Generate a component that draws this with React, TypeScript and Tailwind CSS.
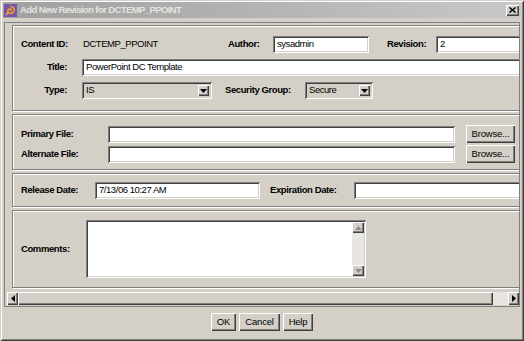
import React from "react";

const raised =
  "bg-[#d4d0c8] shadow-[inset_1px_1px_0_#ffffff,inset_-1px_-1px_0_#404040,inset_-2px_-2px_0_#808080]";
const sunken =
  "shadow-[inset_1px_1px_0_#808080,inset_-1px_-1px_0_#ffffff,inset_2px_2px_0_#404040,inset_-2px_-2px_0_#d4d0c8]";
const etched =
  "border border-[#808080] shadow-[inset_1px_1px_0_#ffffff,1px_1px_0_#ffffff]";
const txt = "text-[9.5px] tracking-[-0.45px]";

function TextBox({ w, value }: { w: string; value?: string }) {
  return (
    <div className={`${w} h-[17px] bg-white ${sunken} flex items-center pl-[4px] ${txt} whitespace-nowrap overflow-hidden shrink-0`}>
      {value}
    </div>
  );
}

function DownTri({ color = "#000" }: { color?: string }) {
  return (
    <svg width="7" height="4" viewBox="0 0 7 4">
      <path d="M0 0H7L3.5 4Z" fill={color} />
    </svg>
  );
}

function Select({ w, value }: { w: string; value: string }) {
  return (
    <div className={`${w} h-[17px] bg-[#d4d0c8] ${sunken} flex items-center pl-[4px] pr-[3px] ${txt} shrink-0`}>
      <span className="flex-1">{value}</span>
      <div className={`w-[11px] h-[11px] ${raised} flex items-center justify-center`}>
        <DownTri />
      </div>
    </div>
  );
}

function Btn({ w, label }: { w: string; label: string }) {
  return (
    <div className={`${w} h-[18px] ${raised} flex items-center justify-center text-[9.5px] tracking-[-0.2px] shrink-0`}>
      {label}
    </div>
  );
}

function Label({ w, text, right }: { w: string; text: string; right?: boolean }) {
  return (
    <div className={`${w} shrink-0 text-[9.5px] tracking-[-0.4px] font-bold whitespace-nowrap ${right ? "text-right pr-[15px]" : ""}`}>
      {text}
    </div>
  );
}

export default function App() {
  return (
    <div className="w-[524px] h-[341px] bg-[#d4d0c8] overflow-hidden font-['Liberation_Sans',Arial,sans-serif] text-black shadow-[inset_1px_1px_0_#d4d0c8,inset_-1px_-1px_0_#404040,inset_2px_2px_0_#ffffff,inset_-2px_-2px_0_#808080] flex flex-col pt-[2px] px-[3px] pb-[4px]">
      {/* Title bar */}
      <div className="h-[16px] flex items-center bg-gradient-to-r from-[#a0a0a0] to-[#c8c8c8] pl-[1px] pr-[2px] shrink-0">
        <svg width="13" height="13" viewBox="0 0 13 13">
          <rect width="13" height="13" fill="#7d55a8" />
          <path d="M6.5 2.5C9 2.5 10.5 4.5 10 6.8C9.5 9 7 10 5 9C3.5 8.2 3.3 6 4.8 5.2C6 4.6 7.5 5.4 7.2 6.8" stroke="#f7a21b" strokeWidth="1.6" fill="none" />
          <path d="M2 11L4 8.5" stroke="#ffd34d" strokeWidth="1.2" />
        </svg>
        <span className="ml-[3px] text-[9.5px] tracking-[-0.6px] font-bold text-[#e6e4df] whitespace-nowrap">
          Add New Revision for DCTEMP_PPOINT
        </span>
        <div className={`ml-auto w-[13px] h-[11px] ${raised} flex items-center justify-center`}>
          <svg width="7" height="6" viewBox="0 0 7 6">
            <path d="M0.5 0.5L6.5 5.5M6.5 0.5L0.5 5.5" stroke="#000" strokeWidth="1.5" />
          </svg>
        </div>
      </div>

      {/* Scroll pane */}
      <div className="mt-[4px] h-[285px] mx-[1px] border border-[#808080] flex flex-col shrink-0">
        <div className="flex-1 overflow-hidden pt-[2px] pl-[7px]">
          <div className="w-[530px] flex flex-col gap-[3px]">
            {/* Panel 1 */}
            <div className={`h-[86px] ${etched} pt-[10px] pl-[8px] flex flex-col gap-[6px]`}>
              <div className="h-[17px] flex items-center">
                <Label w="w-[61px]" text="Content ID:" />
                <div className={`w-[146px] shrink-0 pl-[1px] ${txt}`}>DCTEMP_PPOINT</div>
                <Label w="w-[45px]" text="Author:" />
                <TextBox w="w-[96px]" value="sysadmin" />
                <div className="w-[18px] shrink-0" />
                <Label w="w-[49px]" text="Revision:" />
                <TextBox w="w-[90px]" value="2" />
              </div>
              <div className="h-[17px] flex items-center">
                <Label w="w-[61px]" text="Title:" right />
                <TextBox w="w-[450px]" value="PowerPoint DC Template" />
              </div>
              <div className="h-[17px] flex items-center">
                <Label w="w-[61px]" text="Type:" right />
                <Select w="w-[130px]" value="IS" />
                <div className="w-[13px] shrink-0" />
                <Label w="w-[80px]" text="Security Group:" />
                <Select w="w-[68px]" value="Secure" />
              </div>
            </div>

            {/* Panel 2 */}
            <div className={`h-[56px] ${etched} pt-[10px] pl-[8px] flex flex-col gap-[2px]`}>
              <div className="h-[18px] flex items-center">
                <Label w="w-[87px]" text="Primary File:" />
                <TextBox w="w-[347px]" />
                <div className="w-[11px] shrink-0" />
                <Btn w="w-[49px]" label="Browse..." />
              </div>
              <div className="h-[18px] flex items-center">
                <Label w="w-[87px]" text="Alternate File:" />
                <TextBox w="w-[347px]" />
                <div className="w-[11px] shrink-0" />
                <Btn w="w-[49px]" label="Browse..." />
              </div>
            </div>

            {/* Panel 3 */}
            <div className={`h-[34px] ${etched} pl-[8px] flex items-center`}>
              <Label w="w-[74px]" text="Release Date:" />
              <TextBox w="w-[165px]" value="7/13/06 10:27 AM" />
              <div className="w-[10px] shrink-0" />
              <Label w="w-[84px]" text="Expiration Date:" />
              <TextBox w="w-[200px]" />
            </div>

            {/* Panel 4 */}
            <div className={`h-[78px] ${etched} pl-[8px] flex items-center`}>
              <Label w="w-[65px]" text="Comments:" />
              <div className={`w-[280px] h-[58px] bg-white ${sunken} p-[2px] flex justify-end shrink-0`}>
                <div className="w-[12px] h-full bg-[#e8e6e1] flex flex-col justify-between">
                  <div className={`w-[12px] h-[11px] ${raised} flex items-center justify-center`}>
                    <svg width="7" height="4" viewBox="0 0 7 4">
                      <path d="M0 4H7L3.5 0Z" fill="#8a8a8a" />
                    </svg>
                  </div>
                  <div className={`w-[12px] h-[11px] ${raised} flex items-center justify-center`}>
                    <DownTri color="#8a8a8a" />
                  </div>
                </div>
              </div>
            </div>
          </div>
        </div>

        {/* Horizontal scrollbar */}
        <div className="h-[13px] mb-[1px] ml-[2px] flex shrink-0">
          <div className={`w-[11px] h-full ${raised} flex items-center justify-center`}>
            <svg width="4" height="7" viewBox="0 0 4 7">
              <path d="M4 0V7L0 3.5Z" fill="#000" />
            </svg>
          </div>
          <div className={`w-[475px] h-full ${raised}`} />
          <div className="flex-1 h-full bg-[#e8e6e1]" />
          <div className={`w-[11px] h-full ${raised} flex items-center justify-center`}>
            <svg width="4" height="7" viewBox="0 0 4 7">
              <path d="M0 0V7L4 3.5Z" fill="#000" />
            </svg>
          </div>
        </div>
      </div>

      {/* Buttons */}
      <div className="flex-1 flex justify-center items-start pt-[6px] gap-[3px]">
        <Btn w="w-[25px]" label="OK" />
        <Btn w="w-[41px]" label="Cancel" />
        <Btn w="w-[30px]" label="Help" />
      </div>
    </div>
  );
}
